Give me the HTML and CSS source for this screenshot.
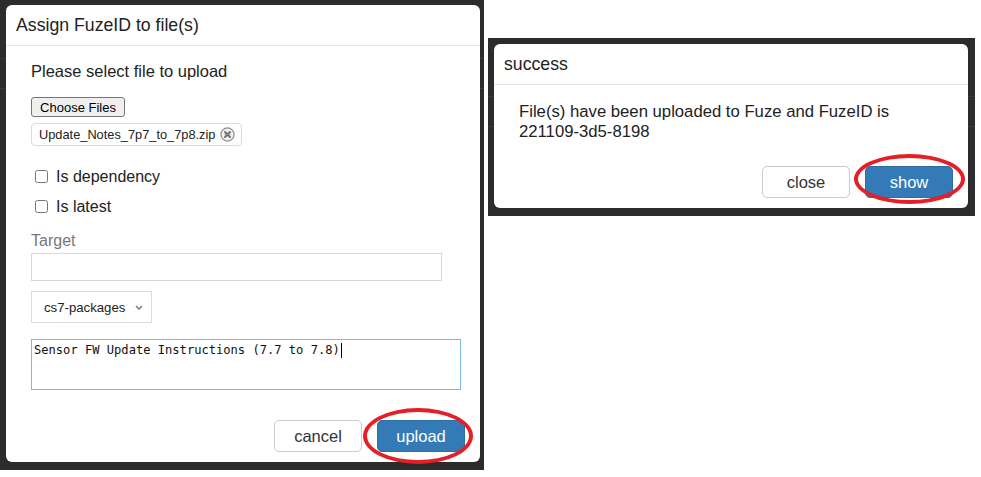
FILE: index.html
```html
<!doctype html>
<html>
  <head>
    <title>Assign FuzeID to file(s)</title>
    <link rel="stylesheet" href="styles.css">
  </head>
  <body>
    <div class="page">
      <div class="backdrop backdrop-upload">
        <div class="modal">
          <div class="modal-header">Assign FuzeID to file(s)</div>
          <div class="modal-body">
            <p class="lead">Please select file to upload</p>
            <button class="file-btn">Choose Files</button>
            <div class="file-list">
              <span class="file-chip">Update_Notes_7p7_to_7p8.zip
                <svg class="chip-x" width="15" height="15" viewBox="0 0 15 15">
                  <circle cx="7.5" cy="7.5" r="6.6" fill="#f1f1f1" stroke="#8c8c8c" stroke-width="1.2"/>
                  <path d="M5 5 L10 10 M10 5 L5 10" stroke="#6a6a6a" stroke-width="1.8" stroke-linecap="round"/>
                  <path d="M4.6 7.5 H10.4" stroke="#9a9a9a" stroke-width="0.8"/>
                </svg>
              </span>
            </div>
            <label class="check"><input type="checkbox"> Is dependency</label>
            <label class="check"><input type="checkbox"> Is latest</label>
            <div class="field-label">Target</div>
            <input class="text-input" type="text">
            <div class="select">
              <span>cs7-packages</span>
              <svg width="8" height="5" viewBox="0 0 8 5"><polyline points="1,1 4,4 7,1" fill="none" stroke="#7a7a7a" stroke-width="1.5"/></svg>
            </div>
            <div class="textarea">Sensor FW Update Instructions (7.7 to 7.8)<span class="caret"></span></div>
          </div>
          <div class="modal-footer">
            <button class="btn">cancel</button>
            <span class="circled">
              <button class="btn btn-primary">upload</button>
              <span class="ring ring-upload"></span>
            </span>
          </div>
        </div>
      </div>

      <div class="backdrop backdrop-success">
        <div class="modal">
          <div class="modal-header">success</div>
          <div class="modal-body message">File(s) have been uploaded to Fuze and FuzeID is 221109-3d5-8198</div>
          <div class="modal-footer">
            <button class="btn">close</button>
            <span class="circled">
              <button class="btn btn-primary">show</button>
              <span class="ring ring-show"></span>
            </span>
          </div>
        </div>
      </div>
    </div>
  </body>
</html>
```

FILE: styles.css
```css
body { margin: 0; background: #fff; color: #222; font-family: "Liberation Sans", Arial, sans-serif; }

.page { display: flex; align-items: flex-start; gap: 4px; }

.backdrop {
  box-sizing: border-box;
  background:
    linear-gradient(to bottom, transparent 58px, #3a3a3a 58px, #3a3a3a 59px, transparent 59px,
      transparent 88px, #3a3a3a 88px, #3a3a3a 89px, transparent 89px),
    #2c2c2c;
}
.backdrop-upload { width: 484px; height: 470px; padding: 5px 4px 8px 6px; }
.backdrop-success { width: 487px; margin-top: 38px; padding: 6px 7px 8px 6px; }

.modal { background: #fff; border-radius: 6px; }
.modal-header { padding: 10px; line-height: 20px; font-size: 17.7px; border-bottom: 1px solid #e5e5e5; }
.modal-body { padding: 15px 25px; font-size: 16.5px; line-height: 21px; }
.modal-footer { display: flex; justify-content: flex-end; gap: 15px; padding: 15px 15px 10px; }

.lead { margin: 0 0 15px; }

.file-btn {
  display: block; width: 94px; height: 20px; padding: 0;
  background: #efefef; border: 1px solid #767676; border-radius: 3px;
  font: 13px "Liberation Sans", Arial, sans-serif; color: #000;
}
.file-list { display: flex; margin-top: 6px; }
.file-chip {
  display: flex; align-items: center; gap: 5px; height: 23px; box-sizing: border-box;
  padding: 0 6px 0 7px; border: 1px solid #dadada; border-radius: 4px;
  font-size: 12.8px; line-height: 16px;
}

.check { display: flex; align-items: center; gap: 8px; height: 30px; padding-left: 4px; font-size: 16px; }
.check:first-of-type { margin-top: 15px; }
.check input { margin: 0; width: 13px; height: 13px; }

.field-label { margin-top: 9px; color: #777; font-size: 16px; }
.text-input {
  display: block; margin: 2px 0 0; width: 411px; height: 28px; box-sizing: border-box;
  border: 1px solid #d9d9d9; padding: 0 6px;
}
.select {
  display: flex; align-items: center; justify-content: space-between;
  margin-top: 10px; width: 121px; height: 32px; box-sizing: border-box;
  padding: 0 8px 0 12px; border: 1px solid #dcdcdc; font-size: 13.2px;
}
.textarea {
  margin-top: 16px; width: 430px; height: 51px; box-sizing: border-box; padding: 3px 2px 2px;
  border: 1px solid #74b9e7; color: #111;
  font: 12.1px/15px "DejaVu Sans Mono", monospace;
}
.caret { display: inline-block; width: 1px; height: 15px; margin-left: 1px; background: #000; vertical-align: top; }

.message { padding: 17px 25px 9px; line-height: 20px; font-size: 16.7px; }

.btn {
  width: 88px; height: 32px; padding: 0; border: 1px solid #ccc; border-radius: 5px;
  background: #fff; color: #333; font: 16.5px "Liberation Sans", Arial, sans-serif;
}
.btn-primary { background: #337ab7; border-color: #2e6da4; color: #fff; }

.circled { position: relative; display: inline-block; height: 32px; }
.ring { position: absolute; border: 4px solid #e41f27; border-radius: 50%; pointer-events: none; }
.ring-upload { left: -14px; top: -12px; right: -8px; bottom: -12px; }
.ring-show { left: -11px; top: -12px; right: -12px; bottom: -6px; }
```
